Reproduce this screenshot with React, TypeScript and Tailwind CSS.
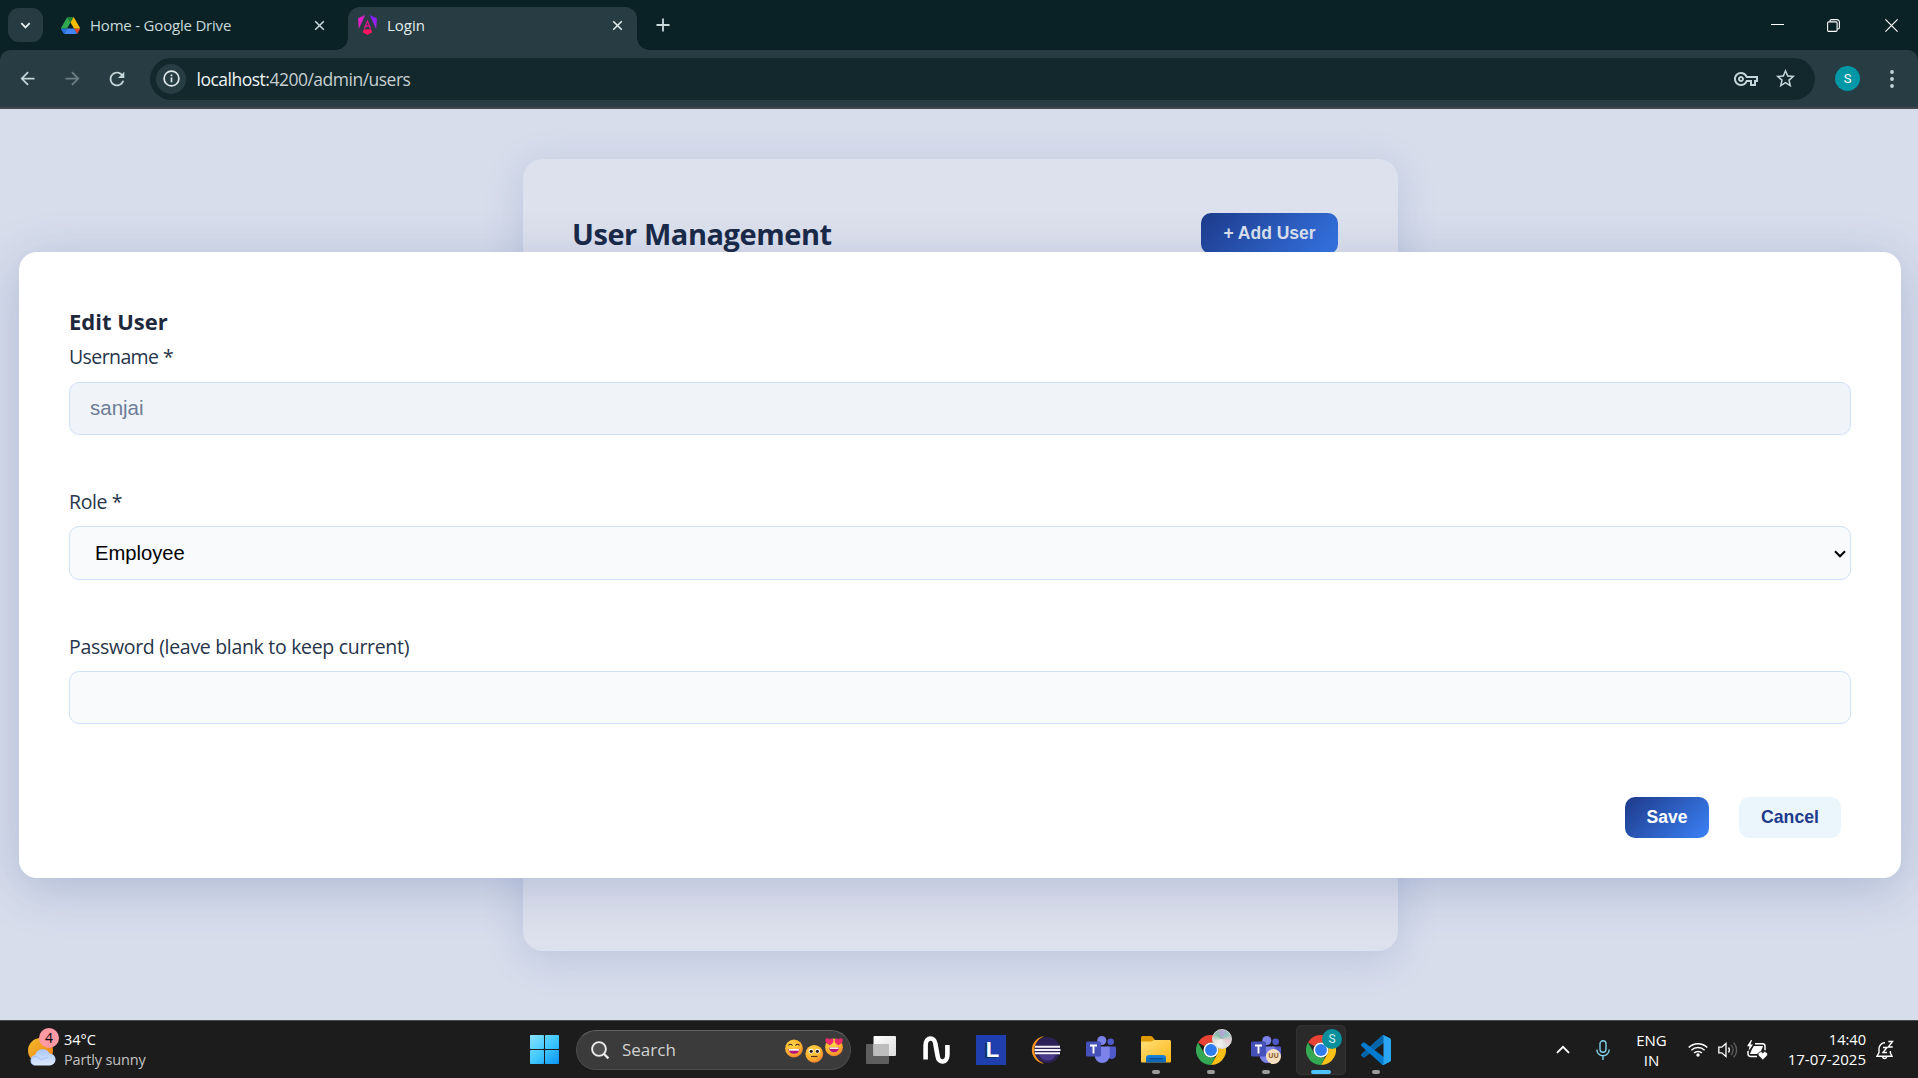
import React from "react";
import { MdArrowBack, MdArrowForward, MdOutlineVpnKey, MdRefresh, MdStarBorder } from "react-icons/md";

const SANS = "font-['Open_Sans','Noto_Sans',sans-serif]";
const ARIAL = "font-['Liberation_Sans',Arial,sans-serif]";

/* ---------- Browser chrome ---------- */

function CloseX({ className }: { className: string }) {
  return (
    <svg viewBox="0 0 12 12" className={className} fill="none" stroke="currentColor" strokeWidth="1.7">
      <path d="M1.3 1.3 10.7 10.7M10.7 1.3 1.3 10.7" />
    </svg>
  );
}

function DriveIcon() {
  return (
    <svg viewBox="0 0 87.3 78" className="h-[17px] w-[19px]">
      <path d="m6.6 66.85 3.85 6.65c.8 1.4 1.95 2.5 3.3 3.3l13.75-23.8h-27.5c0 1.55.4 3.1 1.2 4.5z" fill="#2672ec" />
      <path d="m43.65 25-13.75-23.8c-1.35.8-2.5 1.9-3.3 3.3l-25.4 44a9.06 9.06 0 0 0 -1.2 4.5h27.5z" fill="#2fa84f" />
      <path d="m73.55 76.8c1.35-.8 2.5-1.9 3.3-3.3l1.6-2.75 7.65-13.25c.8-1.4 1.2-2.95 1.2-4.5h-27.5l5.85 11.5z" fill="#ea4335" />
      <path d="m43.65 25 13.75-23.8c-1.35-.8-2.9-1.2-4.5-1.2h-18.5c-1.6 0-3.15.45-4.5 1.2z" fill="#188038" />
      <path d="m59.8 53h-32.3l-13.75 23.8c1.35.8 2.9 1.2 4.5 1.2h50.8c1.6 0 3.15-.45 4.5-1.2z" fill="#4285f4" />
      <path d="m73.4 26.5-12.7-22c-.8-1.4-1.95-2.5-3.3-3.3l-13.75 23.8 16.15 28h27.45c0-1.55-.4-3.1-1.2-4.5z" fill="#fbbc04" />
    </svg>
  );
}

function AngularIcon() {
  return (
    <svg viewBox="0 0 223 236" className="h-[20px] w-[19px]">
      <defs>
        <linearGradient id="ng" x1="0" y1="0" x2="1" y2="0.35">
          <stop offset="0" stopColor="#f01ad0" />
          <stop offset="0.55" stopColor="#e31fc4" />
          <stop offset="1" stopColor="#d81fd8" />
        </linearGradient>
        <linearGradient id="ngr" x1="0" y1="0" x2="0" y2="1">
          <stop offset="0" stopColor="#7a22f5" />
          <stop offset="1" stopColor="#b51cf0" />
        </linearGradient>
      </defs>
      <path fill="url(#ngr)" d="m222.08 39.19-8.13 125.92L137.39 0z" />
      <path fill="url(#ng)" d="M84.69 0 8.13 165.11 0 39.19z" />
      <path fill="#ff1464" d="m167.36 180.84-56.32 32.34-56.32-32.34 13.73-33.4h85.18z" transform="translate(0 22)" />
      <path fill="#e0158c" fillRule="evenodd" d="M111.04 52 66 160h19l9-22h34l9 22h19zM111 88l13 32H98z" />
    </svg>
  );
}

function TabStrip() {
  return (
    <div className="flex h-[50px] items-center bg-[#0a2225] text-[15px] text-[#c9dadd]">
      <div className="ml-2 flex h-[34px] w-[35px] items-center justify-center rounded-[11px] bg-[#263c42]">
        <svg viewBox="0 0 12 8" className="h-[7px] w-[11px]" fill="none" stroke="#e6eeef" strokeWidth="2">
          <path d="M1.2 1.4 6 6.2 10.8 1.4" />
        </svg>
      </div>
      <div className="flex h-full w-[291px] items-center pl-[18px]">
        <DriveIcon />
        <span className="flex-1 pt-px pl-[10px] tracking-[-0.2px]">Home - Google Drive</span>
        <CloseX className="mr-[9px] size-[11px]" />
      </div>
      <div className="relative mt-[7px] ml-[14px] flex h-[43px] w-[289px] items-center rounded-t-[12px] bg-[#273c43] pb-[7px] pl-[10px] text-[#e3eced]">
        <div className="absolute -left-[12px] bottom-0 size-[12px] bg-[radial-gradient(circle_at_0_0,transparent_11.5px,#273c43_12px)]" />
        <div className="absolute -right-[12px] bottom-0 size-[12px] bg-[radial-gradient(circle_at_100%_0,transparent_11.5px,#273c43_12px)]" />
        <AngularIcon />
        <span className="flex-1 pt-px pl-[10px]">Login</span>
        <CloseX className="mr-[14px] size-[11px]" />
      </div>
      <svg viewBox="0 0 14 14" className="ml-[19px] size-[14px]" stroke="#c9dadd" strokeWidth="1.8">
        <path d="M7 .5v13M.5 7h13" />
      </svg>
      <div className="flex flex-1 items-center justify-end pr-[20px] text-white">
        <svg viewBox="0 0 13 13" className="mr-[43px] size-[13px]" stroke="currentColor" strokeWidth="1">
          <path d="M0 5.5h13" />
        </svg>
        <svg viewBox="0 0 13 13" className="mr-[45px] size-[13px]" fill="none" stroke="currentColor" strokeWidth="1.1">
          <rect x=".6" y="2.9" width="9.5" height="9.5" rx="1.2" />
          <path d="M3 2.6V2A1.4 1.4 0 0 1 4.4.6H10A2.4 2.4 0 0 1 12.4 3v5.6A1.4 1.4 0 0 1 11 10h-.6" />
        </svg>
        <svg viewBox="0 0 13 13" className="size-[13px]" stroke="currentColor" strokeWidth="1.2">
          <path d="M.4.4 12.6 12.6M12.6.4.4 12.6" />
        </svg>
      </div>
    </div>
  );
}

function AddressRow() {
  return (
    <div className="bg-[#0a2225]">
      <div className="flex h-[59px] items-center rounded-t-[10px] border-b-2 border-[#45484f] bg-[#273c43] text-[#c3d5d8]">
        <MdArrowBack className="ml-[17px] size-[21px]" />
        <MdArrowForward className="ml-[24px] size-[21px] text-[#6c7f84]" />
        <MdRefresh className="ml-[23px] size-[22px]" />
        <div className="ml-[22px] flex h-[42px] w-[1665px] items-center rounded-full bg-[#12282d]">
          <div className="ml-[6px] flex size-[30px] items-center justify-center rounded-full bg-[#273c43]">
            <svg viewBox="0 0 17 17" className="size-[17px]" fill="none" stroke="#dfe8ea" strokeWidth="1.7">
              <circle cx="8.5" cy="8.5" r="7.4" />
              <path d="M8.5 7.5v4.8M8.5 4.6v1.7" />
            </svg>
          </div>
          <span className="ml-[10.5px] flex-1 pt-px text-[17.5px] tracking-[-0.5px] text-[#c8cfd1]">
            <span className="text-[#f0f4f4]">localhost:</span>4200/admin/users
          </span>
          <MdOutlineVpnKey className="mr-[16px] size-[24px]" />
          <MdStarBorder className="mr-[18px] size-[23px]" />
        </div>
        <div className="ml-[20px] flex size-[25px] items-center justify-center rounded-full bg-[#0097a7] font-['Roboto',sans-serif] text-[13px] text-white">
          S
        </div>
        <svg viewBox="0 0 4 18" className="ml-[30px] h-[18px] w-[4px]" fill="currentColor">
          <circle cx="2" cy="2" r="1.9" />
          <circle cx="2" cy="9" r="1.9" />
          <circle cx="2" cy="16" r="1.9" />
        </svg>
      </div>
    </div>
  );
}

/* ---------- Page ---------- */

function ManagementCard() {
  return (
    <section className="mt-[50px] ml-[523px] flex h-[792px] w-[875px] flex-col rounded-[20px] bg-[#dde1ed] px-[50px] pt-[54px] shadow-[0_8px_40px_rgba(30,58,138,0.15)]">
      <header className="flex h-[41px] items-center justify-between pr-[10px]">
        <h1 className="-ml-px text-[29px] leading-[41px] font-bold tracking-[-0.45px] text-[#1a2947]">User Management</h1>
        <button
          className={`${ARIAL} flex h-[41px] w-[137px] items-center justify-center rounded-[10px] bg-[linear-gradient(135deg,#1e3b8b,#3676e6)] text-[17.5px] font-bold text-[#dbe1ee]`}
        >
          + Add User
        </button>
      </header>
    </section>
  );
}

function EditDialog() {
  return (
    <div className="absolute inset-0 flex justify-center pt-[143px]">
      <form className="ml-[2px] flex h-[626px] w-[1882px] flex-col rounded-[18px] bg-white px-[50px] pt-[50px] text-[19.5px] text-[#27354a] shadow-[0_10px_50px_rgba(30,58,138,0.22)]">
        <h2 className="text-[22px] leading-[38px] font-bold text-[#1e293b]">Edit User</h2>
        <label className="pt-px leading-[32px] tracking-[-0.6px]">Username *</label>
        <div className={`${ARIAL} mt-[9px] flex h-[53px] items-center rounded-[10px] border border-[#cfe2fa] bg-[#f0f3f8] pl-[20px] text-[20.5px] text-[#6d7d95]`}>
          sanjai
        </div>
        <label className="mt-[50px] leading-[33px] tracking-[-0.4px]">Role *</label>
        <div className={`${ARIAL} mt-[8px] flex h-[54px] items-center justify-between rounded-[10px] border border-[#cfe2fa] bg-[#f8fafc] pr-[4px] pl-[25px] text-[20.2px] text-black`}>
          Employee
          <svg viewBox="0 0 12 8" className="mt-px h-[8px] w-[12px]" fill="none" stroke="#000" strokeWidth="2">
            <path d="M1 1.3 6 6.3 11 1.3" />
          </svg>
        </div>
        <label className="mt-[50px] leading-[33px] tracking-[-0.31px]">Password (leave blank to keep current)</label>
        <div className="mt-[8px] h-[53px] rounded-[10px] border border-[#cfe2fa] bg-[#f8fafc]" />
        <div className={`${ARIAL} mt-[73px] flex justify-end gap-[30px] pr-[10px] font-bold`}>
          <button
            type="button"
            className="flex h-[41px] w-[84px] items-center justify-center rounded-[10px] bg-[linear-gradient(135deg,#1e3a8a,#3b82f6)] pb-px text-[17.5px] text-white"
          >
            Save
          </button>
          <button
            type="button"
            className="flex h-[41px] w-[102px] items-center justify-center rounded-[10px] bg-[#eaf5fc] pb-px text-[17.7px] text-[#1e3a8a]"
          >
            Cancel
          </button>
        </div>
      </form>
    </div>
  );
}

/* ---------- Taskbar icons ---------- */

function WeatherIcon() {
  return (
    <svg viewBox="0 0 32 38" className="h-[38px] w-[32px]">
      <defs>
        <linearGradient id="sun" x1="0" y1="0" x2="1" y2="1">
          <stop offset="0" stopColor="#f3bd2c" />
          <stop offset="1" stopColor="#f07a12" />
        </linearGradient>
        <linearGradient id="cloud" x1="0" y1="0" x2="0" y2="1">
          <stop offset="0" stopColor="#a9c8fb" />
          <stop offset="1" stopColor="#dce9fc" />
        </linearGradient>
      </defs>
      <circle cx="12.5" cy="21.5" r="12.5" fill="url(#sun)" />
      <path d="M7.5 36.5a5.3 5.3 0 0 1-.4-10.5A7.8 7.8 0 0 1 21.6 24.5 6 6 0 1 1 21.5 36.5z" fill="url(#cloud)" />
      <path d="M7 36.5a4.5 4.5 0 0 1 .5-9c3 0 4 3 6 3s3-2 6-2" fill="none" stroke="#86aaf0" strokeWidth=".8" opacity=".7" />
    </svg>
  );
}

function WindowsIcon() {
  return (
    <svg viewBox="0 0 29 29" className="size-[29px]">
      <defs>
        <linearGradient id="win" x1="0" y1="0" x2="29" y2="29" gradientUnits="userSpaceOnUse">
          <stop offset="0" stopColor="#8ae2ff" />
          <stop offset=".5" stopColor="#42c8ff" />
          <stop offset="1" stopColor="#0a94f5" />
        </linearGradient>
      </defs>
      <g fill="url(#win)">
        <rect width="14" height="14" rx=".8" />
        <rect x="15" width="14" height="14" rx=".8" />
        <rect y="15" width="14" height="14" rx=".8" />
        <rect x="15" y="15" width="14" height="14" rx=".8" />
      </g>
    </svg>
  );
}

function Emojis() {
  return (
    <svg viewBox="0 0 58 25" className="h-[25px] w-[58px]">
      <defs>
        <radialGradient id="face" cx=".4" cy=".3" r=".8">
          <stop offset="0" stopColor="#ffd84a" />
          <stop offset=".6" stopColor="#fdb02e" />
          <stop offset="1" stopColor="#f0702c" />
        </radialGradient>
      </defs>
      <circle cx="9" cy="10.5" r="8.9" fill="url(#face)" />
      <path d="M3.5 7.5q2-2.5 4 0M10.5 7.5q2-2.5 4 0" fill="none" stroke="#4a2a20" strokeWidth="1.2" />
      <path d="M3.4 11h11.2a5.6 4.8 0 0 1-11.2 0z" fill="#b4127e" />
      <path d="M4 11h10v1.7H4z" fill="#fff" />
      <circle cx="29.3" cy="15.8" r="8.9" fill="url(#face)" />
      <circle cx="26" cy="13.2" r="2.4" fill="#fff" />
      <circle cx="32.6" cy="13.2" r="2.4" fill="#fff" />
      <circle cx="26.2" cy="13.3" r="1.6" fill="#33201c" />
      <circle cx="32.4" cy="13.3" r="1.6" fill="#33201c" />
      <path d="M26 18.5h6.6" stroke="#5a3020" strokeWidth="1.2" />
      <circle cx="49" cy="9.3" r="8.9" fill="url(#face)" />
      <path d="M44.8 7.2C39 4.5 39.6.3 42.3.2c1.6 0 2.3 1.2 2.3 1.2s1.2-1.1 2.6-.7c2.3.8 1.5 4.9-2.4 6.5zM53.4 7.2c-3.9-1.6-4.7-5.7-2.4-6.5 1.4-.4 2.6.7 2.6.7S54.3.2 55.9.2c2.7.1 3.3 4.3-2.5 7z" fill="#ee2a6a" />
      <path d="M44 9.5h10a5 4.8 0 0 1-10 0z" fill="#b4127e" />
      <path d="M44.6 9.5h8.8v1.4h-8.8z" fill="#fff" />
    </svg>
  );
}

function TaskViewIcon() {
  return (
    <svg viewBox="0 0 30 28" className="h-[28px] w-[30px]">
      <defs>
        <linearGradient id="tv" x1="0" y1="0" x2="1" y2="1">
          <stop offset="0" stopColor="#fff" />
          <stop offset="1" stopColor="#dcdcdc" />
        </linearGradient>
      </defs>
      <rect y="8" width="23" height="20" rx="1" fill="#5e5e5e" />
      <rect x="7.5" width="22.5" height="20" rx="1" fill="url(#tv)" />
      <rect x="7.5" y="8" width="15.5" height="12" fill="#bdbdbd" />
    </svg>
  );
}

function WaveIcon() {
  return (
    <svg viewBox="0 0 27 28" className="h-[28px] w-[27px]" fill="none" stroke="#fff" strokeWidth="4.6">
      <path d="M2.6 23.5V9.5C2.6.5 11.5.5 12.3 7.5L14.7 20.5C15.5 27.5 24.4 27.5 24.4 18.5V9" />
    </svg>
  );
}

function LIcon() {
  return (
    <div className="flex size-[30px] items-center justify-center bg-[#1f3fae] pl-[3px]">
      <span className={`${ARIAL} text-[22px] leading-none font-bold text-white [text-shadow:-2px_1px_0_#0b2f66]`}>L</span>
    </div>
  );
}

function EclipseIcon() {
  return (
    <svg viewBox="0 0 30 28" className="h-[28px] w-[30px]">
      <path d="M13 .3A13.8 13.8 0 0 0 13 27.7 15 15 0 0 1 13 .3z" fill="#f7941e" />
      <circle cx="16.3" cy="14" r="13" fill="#2c2255" />
      <path d="M8 18.5h17a9 9 0 0 1-17 0z" fill="#4a3a8c" />
      <path d="M4 10.8h25M3.5 14h26M4 17.2h25" stroke="#f3f1fa" strokeWidth="1.9" />
    </svg>
  );
}

function TeamsIcon() {
  return (
    <svg viewBox="0 0 30 27" className="h-[27px] w-[30px]">
      <circle cx="24.7" cy="5.8" r="3.3" fill="#5059c9" />
      <path d="M21 10.5h7.6c.8 0 1.4.6 1.4 1.4v6.6a4.5 4.5 0 0 1-9 0z" fill="#5059c9" />
      <circle cx="15.8" cy="4.5" r="4.5" fill="#7b83eb" />
      <path d="M9 10.5h13.5c.8 0 1.3.6 1.3 1.3v7.5a7.6 7.6 0 0 1-15.2 0z" fill="#7b83eb" />
      <rect y="5.5" width="15" height="15" rx="1.5" fill="#4550b8" />
      <path d="M4 9.5h7M7.5 9.5v8" stroke="#fff" strokeWidth="1.9" />
    </svg>
  );
}

function ExplorerIcon() {
  return (
    <svg viewBox="0 0 30 27" className="h-[27px] w-[30px]">
      <defs>
        <linearGradient id="fold" x1="0" y1="0" x2="1" y2="1">
          <stop offset="0" stopColor="#ffdf7a" />
          <stop offset="1" stopColor="#fdb714" />
        </linearGradient>
        <linearGradient id="fb" x1="0" y1="0" x2="0" y2="1">
          <stop offset="0" stopColor="#1a86dc" />
          <stop offset="1" stopColor="#0a5fae" />
        </linearGradient>
      </defs>
      <path d="M0 1.5C0 .7.7 0 1.5 0h8.3c.6 0 1 .2 1.4.6L14 4v4H0z" fill="#dd9a06" />
      <path d="M0 5.5h10.5L13 4h15.5c.8 0 1.5.7 1.5 1.5V25c0 1-.6 1.5-1.5 1.5h-27C.6 26.5 0 26 0 25z" fill="url(#fold)" />
      <path d="M5 26.5V22a3 3 0 0 1 3-3h14a3 3 0 0 1 3 3v4.5z" fill="url(#fb)" />
      <path d="M8.5 22.7h13" stroke="#0a4a8a" strokeWidth="1.2" />
    </svg>
  );
}

function ChromeIcon() {
  return (
    <svg viewBox="0 0 48 48" className="size-[30px]">
      <path d="M3.2 12A24 24 0 0 1 44.8 12H24a12 12 0 0 0-10.4 6z" fill="#ea4335" />
      <path d="M44.8 12A24 24 0 0 1 24 48L34.4 30A12 12 0 0 0 34.4 18L31 12z" fill="#fbc116" />
      <path d="M24 48A24 24 0 0 1 3.2 12L13.6 30A12 12 0 0 0 24 36l6.5-.5z" fill="#34a853" />
      <circle cx="24" cy="24" r="12" fill="#fff" />
      <circle cx="24" cy="24" r="9.5" fill="#2f7bf0" />
    </svg>
  );
}

function VsCodeIcon() {
  return (
    <svg viewBox="0 0 100 100" className="size-[30px]">
      <path d="M96.5 10.8 75.9.9a6.2 6.2 0 0 0-7.1 1.2L1.3 63.6a4.2 4.2 0 0 0 0 6.2l5.5 5a4.2 4.2 0 0 0 5.3.2L93.4 13.4A4.1 4.1 0 0 1 100 16.6v-.2a6.2 6.2 0 0 0-3.5-5.6z" fill="#0065a9" />
      <path d="M96.5 89.2 75.9 99.1a6.2 6.2 0 0 1-7.1-1.2L1.3 36.4a4.2 4.2 0 0 1 0-6.2l5.5-5a4.2 4.2 0 0 1 5.3-.2L93.4 86.6A4.1 4.1 0 0 0 100 83.4v.2a6.2 6.2 0 0 1-3.5 5.6z" fill="#007acc" />
      <path d="M75.9 99.1a6.2 6.2 0 0 1-7.1-1.2c2.3 2.3 6.2.7 6.2-2.6V4.7c0-3.3-3.9-4.9-6.2-2.6A6.2 6.2 0 0 1 75.9.9l20.6 9.9a6.2 6.2 0 0 1 3.5 5.6v67.2a6.2 6.2 0 0 1-3.5 5.6z" fill="#2aa5f2" />
    </svg>
  );
}

function AppCell({ children, state }: { children: React.ReactNode; state?: "open" | "active" }) {
  return (
    <div className="flex w-[55px] justify-center">
      <div
        className={`relative flex h-[50px] w-[50px] items-center justify-center rounded-[5px] border ${
          state === "active" ? "border-[#343434] bg-[#2a2a2a]" : "border-transparent"
        }`}
      >
        {children}
        {state === "open" && <div className="absolute bottom-0 h-[4px] w-[8px] rounded-full bg-[#9b9b9b]" />}
        {state === "active" && <div className="absolute bottom-0 h-[4px] w-[20px] rounded-full bg-[#4cc2ff]" />}
      </div>
    </div>
  );
}

function Taskbar() {
  return (
    <footer className="flex h-[58px] items-center border-t border-[#474a4e] bg-[#1c1c1c] text-white">
      <div className="flex w-[516px] items-center pl-[28px]">
        <div className="relative mb-[4px]">
          <WeatherIcon />
          <div className="absolute -top-px left-[11px] flex size-[20px] items-center justify-center rounded-full bg-[#ff99a4] text-[14px] text-black">
            4
          </div>
        </div>
        <div className="ml-[4px] text-[14.5px] leading-[20px]">
          <div>34°C</div>
          <div className="tracking-[-0.15px] text-[#c2c2c2]">Partly sunny</div>
        </div>
      </div>
      <div className="flex w-[60px] justify-center pr-[3px]">
        <WindowsIcon />
      </div>
      <div className="flex h-[40px] w-[275px] items-center rounded-full border border-[#4c4c4c] border-t-[#626262] bg-[#3b3b3b] pl-[14px]">
        <svg viewBox="0 0 18 18" className="size-[18px]" fill="none" stroke="#ededed" strokeWidth="1.9">
          <circle cx="8" cy="8" r="6.9" fill="#505050" />
          <path d="M13 13l4.4 4.4" strokeWidth="2.3" />
        </svg>
        <span className="flex-1 pt-px pl-[13px] text-[17px] text-[#d2d2d2]">Search</span>
        <div className="mt-[1px] mr-[7px]">
          <Emojis />
        </div>
      </div>
      <div className="ml-[2.5px] flex">
        <AppCell><TaskViewIcon /></AppCell>
        <AppCell><WaveIcon /></AppCell>
        <AppCell><LIcon /></AppCell>
        <AppCell><EclipseIcon /></AppCell>
        <AppCell><TeamsIcon /></AppCell>
        <AppCell state="open"><ExplorerIcon /></AppCell>
        <AppCell state="open">
          <ChromeIcon />
          <div className="absolute top-[3px] right-[3px] size-[20px] rounded-full border border-[#d8d8d8] bg-[conic-gradient(#b7a3d6,#8fc7bd,#e9c9d2,#dfe3e0,#f2f2f2,#e6e2dd,#86bfa6,#b7a3d6)]" />
        </AppCell>
        <AppCell state="open">
          <TeamsIcon />
          <div className="absolute right-[9px] bottom-[10px] flex size-[15px] items-center justify-center rounded-full bg-[#f5dfc0] text-[7px] font-bold text-[#8a5a2a]">
            UU
          </div>
        </AppCell>
        <AppCell state="active">
          <ChromeIcon />
          <div className="absolute top-[3px] right-[3px] flex size-[20px] items-center justify-center rounded-full bg-[#0c8f9c] font-['Roboto',sans-serif] text-[12px] text-[#d5eef0]">
            S
          </div>
        </AppCell>
        <AppCell state="open"><VsCodeIcon /></AppCell>
      </div>
      <div className="flex flex-1 items-center justify-end pr-[24px]">
        <svg viewBox="0 0 14 9" className="h-[9px] w-[14px]" fill="none" stroke="#fff" strokeWidth="1.9">
          <path d="M1 7.8 7 1.8l6 6" />
        </svg>
        <svg viewBox="0 0 14 20" className="ml-[26px] h-[20px] w-[14px]" fill="none" stroke="#7fd0e6" strokeWidth="1.4">
          <rect x="4" y=".8" width="6" height="11.5" rx="3" />
          <path d="M.8 9.5a6.2 6.2 0 0 0 12.4 0M7 15.8V20" />
        </svg>
        <div className="ml-[25px] w-[33px] text-center text-[15px] leading-[20px]">
          <div>ENG</div>
          <div>IN</div>
        </div>
        <svg viewBox="0 0 20 15" className="ml-[20px] h-[15px] w-[20px]" fill="none" stroke="#fff" strokeWidth="1.5">
          <path d="M.7 5.5a13.2 13.2 0 0 1 18.6 0M3.4 8.3a9.4 9.4 0 0 1 13.2 0M6.1 11a5.5 5.5 0 0 1 7.8 0" />
          <circle cx="10" cy="13" r="1.7" fill="#fff" stroke="none" />
        </svg>
        <svg viewBox="0 0 20 18" className="ml-[10px] h-[18px] w-[20px]" fill="none" stroke="#fff" strokeWidth="1.3">
          <path d="M.8 6.2h3L8 2.5v13l-4.2-3.7h-3z" />
          <path d="M10.5 6.5a4 4 0 0 1 0 5" />
          <path d="M13 4a7 7 0 0 1 0 10M15.6 1.8a10.2 10.2 0 0 1 0 14.4" stroke="#5c5c5c" />
        </svg>
        <svg viewBox="0 0 21 20" className="ml-[9px] h-[20px] w-[21px]">
          <path d="M8 3.7h7.5a2.5 2.5 0 0 1 2.5 2.5v4M10 16.5H3.5A2.5 2.5 0 0 1 1 14v-3" fill="none" stroke="#fff" strokeWidth="1.5" />
          <path d="M7 6h9l-2.5 6.5-3.5 1.5H3l2-5z" fill="#fff" />
          <path d="M4 0 0 6.3h2.5L1.5 11 6 4.5H3.5L5 0z" fill="#fff" />
          <path d="M15.8 20 11.5 15.8a2.5 2.5 0 0 1 4.3-2.9 2.5 2.5 0 0 1 4.3 2.9z" fill="#fff" stroke="#1c1c1c" strokeWidth=".8" />
        </svg>
        <div className="mb-px w-[98px] text-right leading-[20px]">
          <div className="text-[14.6px]">14:40</div>
          <div className="text-[15px]">17-07-2025</div>
        </div>
        <svg viewBox="0 0 18 20" className="ml-[10px] h-[20px] w-[18px]" fill="none" stroke="#fff" strokeWidth="1.4">
          <path d="M9 2.8A5.8 5.8 0 0 0 3 8.6v4L1 16.2h15l-1.6-3.2V11M6.5 17a2.2 2.2 0 0 0 4.2 0" />
          <path d="M7 7.5h4l-4 5h4M12.3 1.5H16.5L12.3 7h4.4" />
        </svg>
      </div>
    </footer>
  );
}

export default function App() {
  return (
    <div className={`${SANS} flex h-[1078px] w-[1918px] flex-col overflow-hidden`}>
      <TabStrip />
      <AddressRow />
      <main className="relative flex-1 overflow-hidden bg-[#d7ddeb]">
        <div className="flex flex-col">
          <ManagementCard />
        </div>
        <EditDialog />
      </main>
      <Taskbar />
    </div>
  );
}
